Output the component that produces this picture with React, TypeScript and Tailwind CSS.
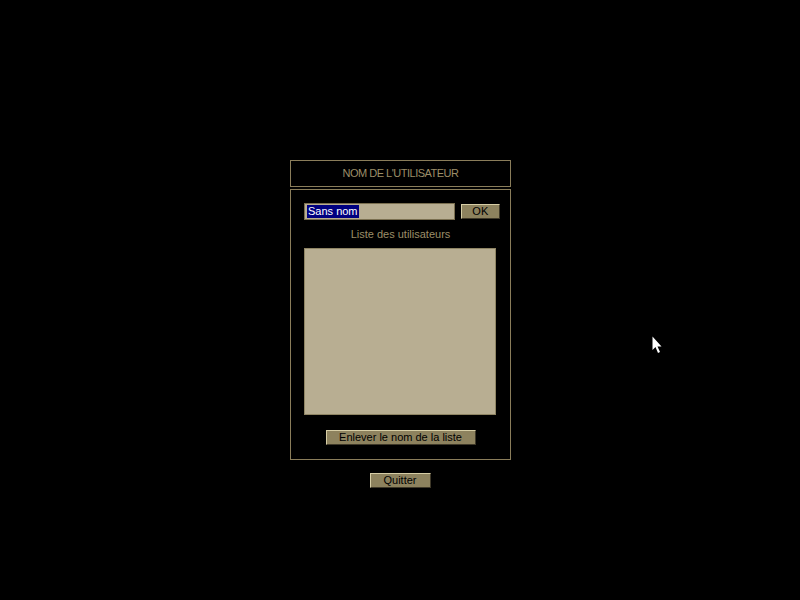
export default function App() {
  return (
    <div
      className="relative w-[800px] h-[600px] bg-black flex flex-col items-center overflow-hidden"
      style={{ fontFamily: '"Liberation Sans", Arial, sans-serif' }}
    >
      {/* Title */}
      <div className="mt-[160px] ml-px w-[221px] h-[27px] border border-[#8a7d5a] flex items-center justify-center text-[11px] tracking-[-0.5px] text-[#9c8e68]">
        NOM DE L'UTILISATEUR
      </div>

      {/* Main panel */}
      <div className="mt-[2px] ml-px w-[221px] h-[271px] border border-[#8a7d5a] flex flex-col">
        <div className="mt-[13px] ml-[13px] flex items-start">
          <div className="w-[151px] h-[17px] bg-[#b8ae92] border border-[#7a6f50] flex items-center pl-[2px]">
            <span className="bg-[#000080] text-white text-[11px] leading-[13px] px-px">Sans nom</span>
          </div>
          <button className="ml-[6px] mt-px w-[39px] h-[15px] bg-[#8d825e] border border-t-[#d6cda5] border-l-[#d6cda5] border-r-[#3e3828] border-b-[#3e3828] text-[11px] leading-none text-black tracking-wide flex items-center justify-center">
            OK
          </button>
        </div>
        <div className="mt-[8px] text-center text-[11px] text-[#9c8e68] leading-[13px]">
          Liste des utilisateurs
        </div>
        <div className="mt-[7px] ml-[13px] w-[192px] h-[167px] bg-[#b8ae92] border border-[#8f8564]" />
        <button className="mt-[15px] self-center w-[150px] h-[15px] bg-[#8d825e] border border-t-[#d6cda5] border-l-[#d6cda5] border-r-[#3e3828] border-b-[#3e3828] text-[11px] leading-none text-black flex items-center justify-center">
          Enlever le nom de la liste
        </button>
      </div>

      <button className="mt-[13px] w-[61px] h-[15px] bg-[#8d825e] border border-t-[#d6cda5] border-l-[#d6cda5] border-r-[#3e3828] border-b-[#3e3828] text-[11px] leading-none text-black flex items-center justify-center">
        Quitter
      </button>

      {/* Mouse cursor */}
      <svg className="absolute left-[652px] top-[336px]" width="12" height="19" viewBox="0 0 12 19">
        <path d="M0.5 0.5 L0.5 14 L3.5 11 L6 17 L8 16 L5.5 10.5 L9.5 10.5 Z" fill="white" />
      </svg>
    </div>
  );
}
